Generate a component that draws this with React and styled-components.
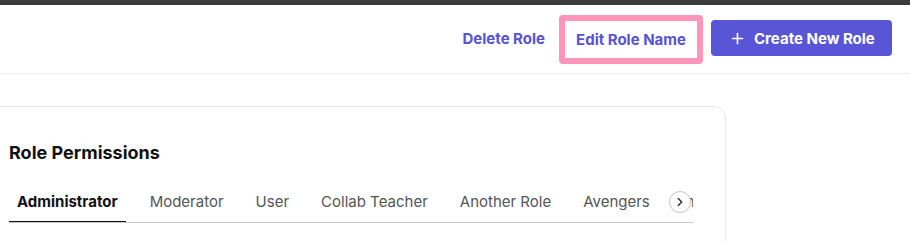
import React from "react";
import styled, { createGlobalStyle } from "styled-components";
import { Plus, ChevronRight } from "lucide-react";

const GlobalStyle = createGlobalStyle`
  html, body {
    margin: 0;
    padding: 0;
    background: #ffffff;
    font-family: Inter, "Noto Sans", sans-serif;
    overflow: hidden;
  }
`;

const tabs = [
  "Administrator",
  "Moderator",
  "User",
  "Collab Teacher",
  "Another Role",
  "Avengers",
  "Interns",
];

function App() {
  return (
    <Page>
      <GlobalStyle />
      <TopBar />
      <Header>
        <TextButton>Delete Role</TextButton>
        <Highlight>
          <TextButton>Edit Role Name</TextButton>
        </Highlight>
        <PrimaryButton>
          <Plus size={17} strokeWidth={2.4} />
          Create New Role
        </PrimaryButton>
      </Header>
      <Main>
        <Card>
          <Title>Role Permissions</Title>
          <TabStrip>
            <TabList>
              {tabs.map((t, i) => (
                <Tab key={t} active={i === 0}>
                  {t}
                </Tab>
              ))}
            </TabList>
            <ScrollButton>
              <ChevronRight size={14} strokeWidth={2.6} />
            </ScrollButton>
          </TabStrip>
        </Card>
      </Main>
    </Page>
  );
}

const Page = styled.div`
  width: 910px;
  height: 241px;
  overflow: hidden;
`;

const TopBar = styled.div`
  height: 5px;
  background: #3b3b3b;
`;

const Header = styled.header`
  height: 69px;
  box-sizing: border-box;
  display: flex;
  align-items: center;
  justify-content: flex-end;
  padding: 0 18px 2px 0;
  border-bottom: 1px solid #ededed;
`;

const TextButton = styled.button`
  background: none;
  border: none;
  padding: 0;
  font-family: Inter, sans-serif;
  font-size: 15px;
  font-weight: 650;
  color: #5753d6;
  cursor: pointer;
`;

const Highlight = styled.div`
  margin: 2px 8px 0 14px;
  width: 144px;
  height: 49px;
  box-sizing: border-box;
  border: 6px solid #ff95b9;
  border-radius: 4px;
  display: flex;
  align-items: center;
  justify-content: center;
`;

const PrimaryButton = styled.button`
  display: flex;
  align-items: center;
  gap: 8px;
  height: 36px;
  width: 181px;
  padding: 0 0 0 18px;
  border: none;
  border-radius: 4px;
  background: #5855d6;
  color: #ffffff;
  font-family: Inter, sans-serif;
  font-size: 15px;
  font-weight: 650;
`;

const Main = styled.main`
  padding-top: 32px;
`;

const Card = styled.section`
  margin-left: -16px;
  width: 742px;
  height: 200px;
  box-sizing: border-box;
  border: 1px solid #e7e7e7;
  border-radius: 12px;
  padding: 34px 32px 0 24px;
`;

const Title = styled.h2`
  margin: 0;
  font-size: 18px;
  font-weight: 700;
  color: #111111;
  line-height: 24px;
`;

const TabStrip = styled.div`
  position: relative;
  margin-top: 18px;
  width: 684px;
  border-bottom: 1px solid #c8c8c8;
`;

const TabList = styled.div`
  display: flex;
  gap: 16px;
  overflow: hidden;
  width: 684px;
`;

const Tab = styled.div`
  flex: none;
  padding: 0 8px;
  height: 40px;
  line-height: 38px;
  font-size: 15px;
  font-weight: ${(p) => (p.active ? 700 : 400)};
  color: ${(p) => (p.active ? "#111111" : "#555555")};
  border-bottom: 2px solid ${(p) => (p.active ? "#111111" : "transparent")};
  box-sizing: border-box;
  margin-bottom: -1px;
`;

const ScrollButton = styled.div`
  position: absolute;
  left: 660px;
  top: 8px;
  width: 22px;
  height: 22px;
  box-sizing: border-box;
  border: 1px solid #c4c4c4;
  border-radius: 50%;
  background: #ffffff;
  display: flex;
  align-items: center;
  justify-content: center;
  color: #333333;
`;

export default App;
